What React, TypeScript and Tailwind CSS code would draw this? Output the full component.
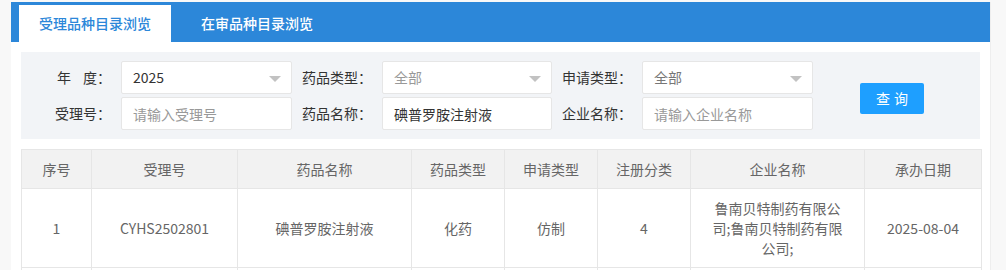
import { useState } from "react";

const font = { fontFamily: '"Noto Sans CJK SC", "Noto Sans", sans-serif' };

interface Row {
  no: string;
  acceptNo: string;
  drugName: string;
  drugType: string;
  applyType: string;
  regClass: string;
  company: string;
  date: string;
}

const rows: Row[] = [
  {
    no: "1",
    acceptNo: "CYHS2502801",
    drugName: "碘普罗胺注射液",
    drugType: "化药",
    applyType: "仿制",
    regClass: "4",
    company: "鲁南贝特制药有限公司;鲁南贝特制药有限公司;",
    date: "2025-08-04",
  },
  {
    no: "2",
    acceptNo: "",
    drugName: "",
    drugType: "",
    applyType: "",
    regClass: "",
    company: "",
    date: "",
  },
];

const cols = [
  { title: "序号", w: "w-[70px]" },
  { title: "受理号", w: "w-[146px]" },
  { title: "药品名称", w: "w-[174px]" },
  { title: "药品类型", w: "w-[93px]" },
  { title: "申请类型", w: "w-[93px]" },
  { title: "注册分类", w: "w-[93px]" },
  { title: "企业名称", w: "w-[174px]" },
  { title: "承办日期", w: "w-[117px]" },
];

const Arrow = () => (
  <span className="absolute right-[10px] top-[14px] w-0 h-0 border-l-[6px] border-r-[6px] border-t-[6px] border-l-transparent border-r-transparent border-t-[#c2c2c2]" />
);

const Label = ({ children }: { children: React.ReactNode }) => (
  <label className="w-[90px] shrink-0 pr-[10px] text-right text-[14px] text-[#333]">{children}</label>
);

const App = () => {
  const [tab, setTab] = useState(0);
  const [year] = useState("2025");
  const [drugName, setDrugName] = useState("碘普罗胺注射液");

  return (
    <div className="min-h-screen bg-[#f8f8f8] pt-[2px] pl-[11px] pr-[15px]" style={font}>
      <div className="w-[980px] bg-white border-r border-[#eeeeee]">
        {/* tabs */}
        <div className="h-[40px] bg-[#2c87d9] flex items-end pl-[8px] gap-[10px]">
          {["受理品种目录浏览", "在审品种目录浏览"].map((t, i) => (
            <button
              key={t}
              type="button"
              onClick={() => setTab(i)}
              className={`h-[37px] w-[152px] text-[14px] font-medium ${
                tab === i ? "bg-white text-[#2c87d9]" : "text-white"
              }`}
            >
              {t}
            </button>
          ))}
        </div>

        <div className="p-[10px]">
          {/* search */}
          <div className="h-[87px] bg-[#f2f4f7] flex items-center pl-[10px]">
            <div className="flex flex-col gap-[3px]">
              <div className="flex items-center">
                <Label>
                  年<span className="inline-block w-[12px]" />度：
                </Label>
                <div className="relative w-[171px] h-[33px] bg-white border border-[#e6e6e6] rounded-[2px] flex items-center pl-[11px] text-[14px] text-[#333]">
                  {year}
                  <Arrow />
                </div>
                <Label>药品类型：</Label>
                <div className="relative w-[170px] h-[33px] bg-white border border-[#e6e6e6] rounded-[2px] flex items-center pl-[11px] text-[14px] text-[#999]">
                  全部
                  <Arrow />
                </div>
                <Label>申请类型：</Label>
                <div className="relative w-[171px] h-[33px] bg-white border border-[#e6e6e6] rounded-[2px] flex items-center pl-[11px] text-[14px] text-[#777]">
                  全部
                  <Arrow />
                </div>
              </div>
              <div className="flex items-center">
                <Label>受理号：</Label>
                <input
                  placeholder="请输入受理号"
                  className="w-[171px] h-[33px] bg-white border border-[#e6e6e6] rounded-[2px] pl-[11px] text-[14px] text-[#333] placeholder:text-[#999] outline-none"
                />
                <Label>药品名称：</Label>
                <input
                  value={drugName}
                  onChange={(e) => setDrugName(e.target.value)}
                  className="w-[170px] h-[33px] bg-white border border-[#e6e6e6] rounded-[2px] pl-[11px] text-[14px] text-[#333] outline-none"
                />
                <Label>企业名称：</Label>
                <input
                  placeholder="请输入企业名称"
                  className="w-[171px] h-[33px] bg-white border border-[#e6e6e6] rounded-[2px] pl-[11px] text-[14px] text-[#333] placeholder:text-[#999] outline-none"
                />
              </div>
            </div>
            <button
              type="button"
              className="ml-[47px] mt-[5px] w-[64px] h-[31px] rounded-[2px] bg-[#1e9fff] text-white text-[14px] tracking-[4px] pl-[4px]"
            >
              查询
            </button>
          </div>

          {/* table */}
          <table className="mt-[10px] border-collapse table-fixed w-[960px] text-[14px] text-[#666]">
            <thead>
              <tr className="bg-[#f2f2f2] h-[39px]">
                {cols.map((c) => (
                  <th key={c.title} className={`${c.w} border border-[#e6e6e6] font-normal text-center`}>
                    {c.title}
                  </th>
                ))}
              </tr>
            </thead>
            <tbody>
              {rows.map((r) => (
                <tr key={r.no} className="h-[78px]">
                  <td className="border border-[#e6e6e6] text-center">{r.acceptNo ? r.no : ""}</td>
                  <td className="border border-[#e6e6e6] text-center">{r.acceptNo}</td>
                  <td className="border border-[#e6e6e6] text-center">{r.drugName}</td>
                  <td className="border border-[#e6e6e6] text-center">{r.drugType}</td>
                  <td className="border border-[#e6e6e6] text-center">{r.applyType}</td>
                  <td className="border border-[#e6e6e6] text-center">{r.regClass}</td>
                  <td className="border border-[#e6e6e6] text-center leading-[20px] py-[9px]">
                    <div className="w-[130px] mx-auto break-all">{r.company}</div>
                  </td>
                  <td className="border border-[#e6e6e6] text-center">{r.date}</td>
                </tr>
              ))}
            </tbody>
          </table>
        </div>
      </div>
    </div>
  );
};

export default App;
